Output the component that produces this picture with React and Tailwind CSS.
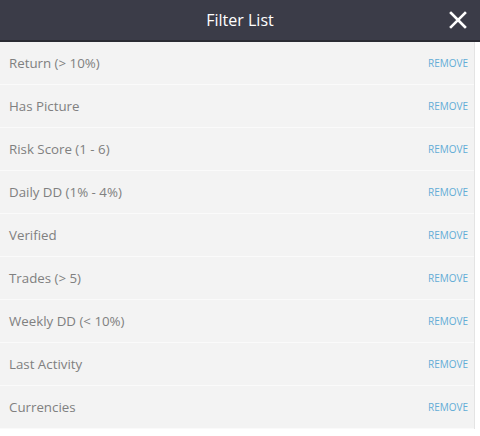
const filters = [
  "Return (> 10%)",
  "Has Picture",
  "Risk Score (1 - 6)",
  "Daily DD (1% - 4%)",
  "Verified",
  "Trades (> 5)",
  "Weekly DD (< 10%)",
  "Last Activity",
  "Currencies",
];

export default function App() {
  return (
    <div
      className="w-[480px] h-[436px] bg-white overflow-hidden"
      style={{ fontFamily: '"Open Sans", "Noto Sans", sans-serif' }}
    >
      <div className="h-[42px] bg-[#3b3c48] border-b-2 border-[#2a2b33] flex items-center justify-center relative">
        <span className="text-white text-[16px] leading-none">Filter List</span>
        <button className="absolute right-[13px] top-[11px] text-white">
          <svg width="18" height="18" viewBox="0 0 18 18" fill="none">
            <path d="M2 2L16 16M16 2L2 16" stroke="white" strokeWidth="2.6" strokeLinecap="square" />
          </svg>
        </button>
      </div>
      <ul className="w-[475px] border-r border-[#e4e4e4] bg-[#f3f3f3]">
        {filters.map((f) => (
          <li
            key={f}
            className="h-[43px] flex items-center justify-between pl-[9px] pr-[6px] border-b border-[#fafafa]"
          >
            <span className="text-[13.3px] text-[#808080] pt-px">{f}</span>
            <span className="text-[10px] text-[#62acd6]">REMOVE</span>
          </li>
        ))}
      </ul>
    </div>
  );
}
